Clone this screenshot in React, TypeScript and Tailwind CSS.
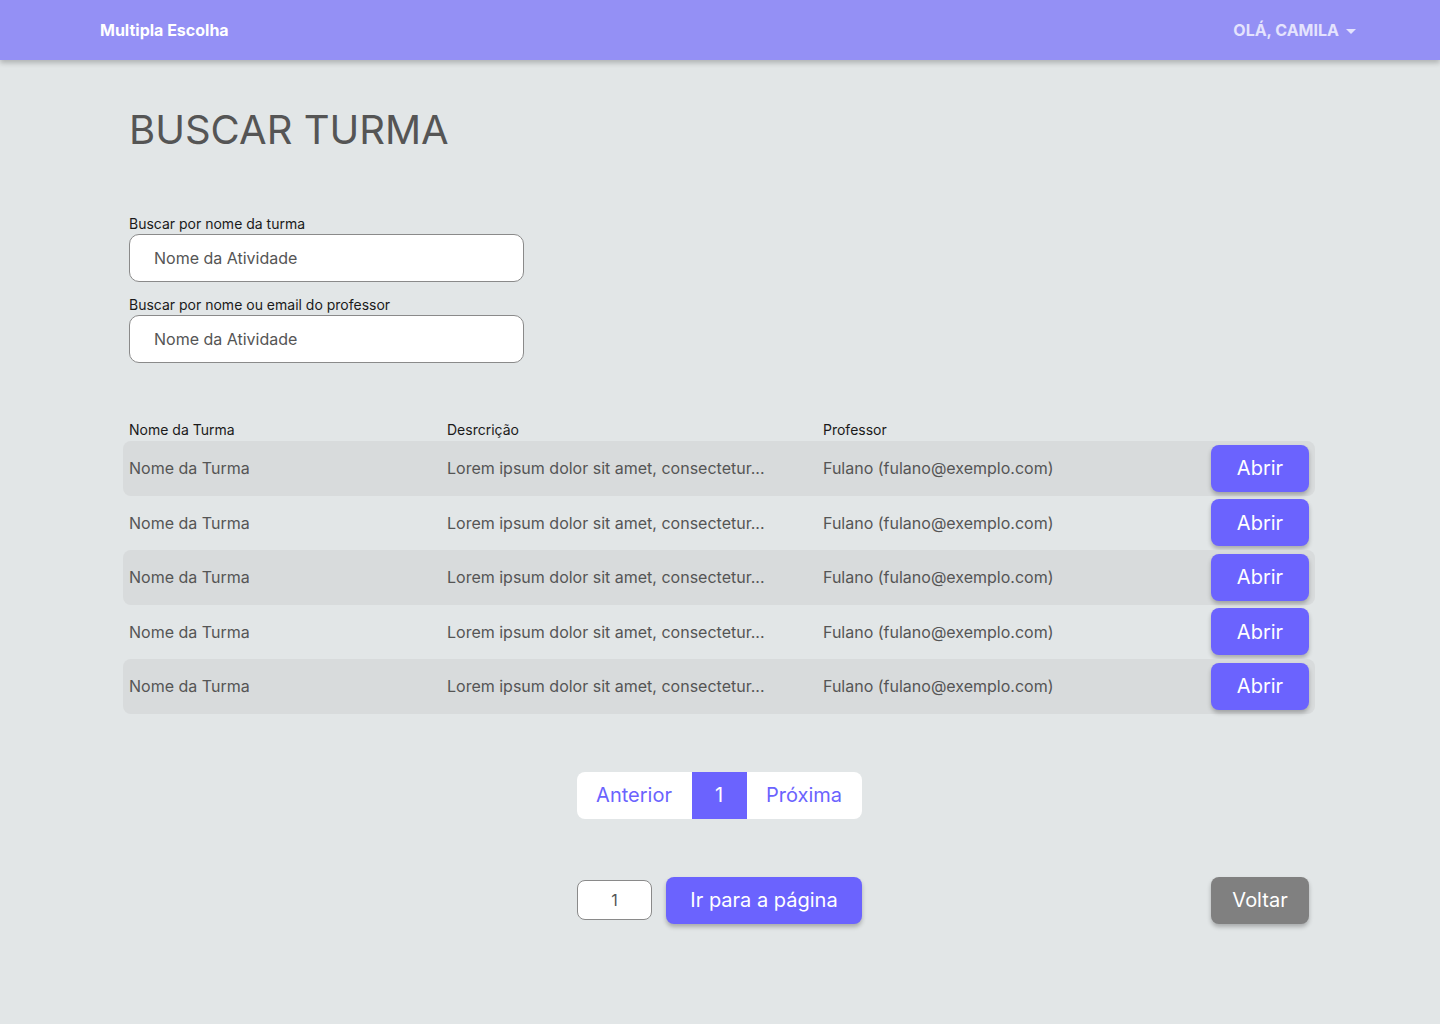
import React from "react";

const rows = Array.from({ length: 5 }, (_, i) => ({
  id: i,
  nome: "Nome da Turma",
  descricao: "Lorem ipsum dolor sit amet, consectetur...",
  professor: "Fulano (fulano@exemplo.com)",
}));

export default function App() {
  return (
    <div
      className="min-h-[1024px] w-full bg-[#e2e6e7]"
      style={{ fontFamily: "Inter, 'Noto Sans', sans-serif" }}
    >
      {/* Top bar */}
      <header className="flex h-[60px] items-center justify-between bg-[#9490f5] pl-[100px] pr-[84px] shadow-[0_3px_5px_rgba(0,0,0,0.22)]">
        <span className="text-[16px] font-bold text-white">Multipla Escolha</span>
        <button className="flex items-center gap-[7px] text-[16px] font-bold text-[#e4e3fd]">
          OLÁ, CAMILA
          <svg width="10" height="6" viewBox="0 0 10 6" className="mt-[4px]">
            <path d="M0 0 L10 0 L5 5 Z" fill="#e4e3fd" />
          </svg>
        </button>
      </header>

      <main className="pl-[123px] pr-[125px]">
        <h1 className="mt-[45px] pl-[6px] text-[40px] font-normal leading-[50px] text-[#555555]">
          BUSCAR TURMA
        </h1>

        {/* Filters */}
        <div className="mt-[60px] flex w-[401px] flex-col pl-[6px]">
          <label className="text-[14px] leading-[18px] text-[#1a1a1a]">Buscar por nome da turma</label>
          <input
            placeholder="Nome da Atividade"
            className="mt-[1px] h-[48px] w-[395px] rounded-[10px] border border-[#8a8a8a] bg-white px-[24px] text-[16px] text-[#555] placeholder:text-[#555] focus:outline-none"
          />
          <label className="mt-[14px] text-[14px] leading-[18px] text-[#1a1a1a]">
            Buscar por nome ou email do professor
          </label>
          <input
            placeholder="Nome da Atividade"
            className="mt-[1px] h-[48px] w-[395px] rounded-[10px] border border-[#8a8a8a] bg-white px-[24px] text-[16px] text-[#555] placeholder:text-[#555] focus:outline-none"
          />
        </div>

        {/* Table */}
        <div className="mt-[54px]">
          <div className="grid h-[24px] grid-cols-[318px_376px_1fr_104px] items-center pl-[6px] text-[14px] text-[#1a1a1a]">
            <span>Nome da Turma</span>
            <span>Desrcrição</span>
            <span>Professor</span>
            <span />
          </div>
          <div className="flex flex-col">
            {rows.map((r) => (
              <div
                key={r.id}
                className={`grid h-[54.5px] grid-cols-[318px_376px_1fr_104px] items-center rounded-[8px] pl-[6px] text-[16px] text-[#555555] ${
                  r.id % 2 === 0 ? "bg-[#d8dbdc]" : ""
                }`}
              >
                <span>{r.nome}</span>
                <span>{r.descricao}</span>
                <span>{r.professor}</span>
                <button className="h-[47px] w-[98px] rounded-[8px] bg-[#6b63fe] text-[20px] text-white shadow-[0_3px_4px_rgba(0,0,0,0.25)]">
                  Abrir
                </button>
              </div>
            ))}
          </div>
        </div>

        {/* Pagination */}
        <div className="mt-[58px] flex justify-center">
          <div className="flex h-[47px] overflow-hidden rounded-[8px] bg-white text-[20px] text-[#6b63fe]">
            <button className="w-[115px]">Anterior</button>
            <button className="w-[55px] bg-[#6b63fe] text-white">1</button>
            <button className="w-[115px]">Próxima</button>
          </div>
        </div>

        <div className="mt-[58px] grid grid-cols-[454px_285px_1fr] items-center">
          <span />
          <div className="flex items-center gap-[14px]">
            <input
              defaultValue="1"
              className="h-[40px] w-[75px] rounded-[8px] border border-[#8a8a8a] bg-white text-center text-[16px] text-[#555] focus:outline-none"
            />
            <button className="h-[47px] w-[196px] rounded-[8px] bg-[#6b63fe] text-[20px] text-white shadow-[0_3px_4px_rgba(0,0,0,0.25)]">
              Ir para a página
            </button>
          </div>
          <div className="flex justify-end pr-[6px]">
            <button className="h-[47px] w-[98px] rounded-[8px] bg-[#808080] text-[20px] text-white shadow-[0_3px_4px_rgba(0,0,0,0.25)]">
              Voltar
            </button>
          </div>
        </div>
      </main>
    </div>
  );
}
